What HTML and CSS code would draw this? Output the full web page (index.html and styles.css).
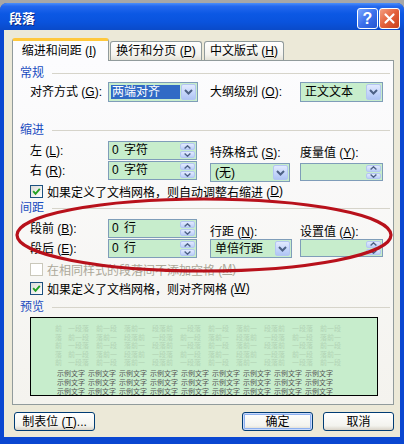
FILE: index.html
```html
<!DOCTYPE html>
<html lang="zh-CN">
<head>
<meta charset="utf-8">
<title>段落</title>
<link rel="stylesheet" href="styles.css">
</head>
<body>
<div class="window">
  <div class="titlebar">
    <span class="title">段落</span>
    <div class="tb-btns">
      <span class="tb-btn help">?</span>
      <span class="tb-btn close"><svg width="13" height="13" viewBox="0 0 13 13"><path d="M2.5 2.5 L10.5 10.5 M10.5 2.5 L2.5 10.5" stroke="#fff" stroke-width="2.2" stroke-linecap="round"/></svg></span>
    </div>
  </div>
  <div class="client">
    <div class="tabs">
      <div class="tab active">缩进和间距 (<u>I</u>)</div>
      <div class="tab t2">换行和分页 (<u>P</u>)</div>
      <div class="tab t3">中文版式 (<u>H</u>)</div>
    </div>
    <div class="panel">
      <div class="sec"><span>常规</span><i></i></div>
      <div class="grid row-general">
        <span class="lbl c1">对齐方式 (<u>G</u>):</span>
        <div class="combo w90 c2"><span class="val sel"><span class="hl">两端对齐</span></span><span class="dd"><svg width="9" height="6" viewBox="0 0 9 6"><path d="M1 1 L4.5 4.5 L8 1" fill="none" stroke="#4D6185" stroke-width="2"/></svg></span></div>
        <span class="lbl c4">大纲级别 (<u>O</u>):</span>
        <div class="combo w83 c5"><span class="val">正文文本</span><span class="dd"><svg width="9" height="6" viewBox="0 0 9 6"><path d="M1 1 L4.5 4.5 L8 1" fill="none" stroke="#4D6185" stroke-width="2"/></svg></span></div>
      </div>

      <div class="sec s-indent"><span>缩进</span><i></i></div>
      <div class="grid block">
        <span class="lbl c1 r1">左 (<u>L</u>):</span>
        <div class="spin w89 c2 r1"><span class="val">0 字符</span><span class="sbs"><span class="sb"><svg width="7" height="4" viewBox="0 0 7 4"><path d="M0.6 3.4 L3.5 0.8 L6.4 3.4" fill="none" stroke="#4D6185" stroke-width="1.4"/></svg></span><span class="sb"><svg width="7" height="4" viewBox="0 0 7 4"><path d="M0.6 0.6 L3.5 3.2 L6.4 0.6" fill="none" stroke="#4D6185" stroke-width="1.4"/></svg></span></span></div>
        <span class="lbl c1 r2">右 (<u>R</u>):</span>
        <div class="spin w89 c2 r2"><span class="val">0 字符</span><span class="sbs"><span class="sb"><svg width="7" height="4" viewBox="0 0 7 4"><path d="M0.6 3.4 L3.5 0.8 L6.4 3.4" fill="none" stroke="#4D6185" stroke-width="1.4"/></svg></span><span class="sb"><svg width="7" height="4" viewBox="0 0 7 4"><path d="M0.6 0.6 L3.5 3.2 L6.4 0.6" fill="none" stroke="#4D6185" stroke-width="1.4"/></svg></span></span></div>
        <div class="rcol c4 ind">
          <span class="rlbl">特殊格式 (<u>S</u>):</span>
          <div class="combo w80 h19"><span class="val">(无)</span><span class="dd"><svg width="9" height="6" viewBox="0 0 9 6"><path d="M1 1 L4.5 4.5 L8 1" fill="none" stroke="#4D6185" stroke-width="2"/></svg></span></div>
        </div>
        <div class="rcol c5 ind">
          <span class="rlbl">度量值 (<u>Y</u>):</span>
          <div class="spin w83"><span class="val"></span><span class="sbs"><span class="sb"><svg width="7" height="4" viewBox="0 0 7 4"><path d="M0.6 3.4 L3.5 0.8 L6.4 3.4" fill="none" stroke="#4D6185" stroke-width="1.4"/></svg></span><span class="sb"><svg width="7" height="4" viewBox="0 0 7 4"><path d="M0.6 0.6 L3.5 3.2 L6.4 0.6" fill="none" stroke="#4D6185" stroke-width="1.4"/></svg></span></span></div>
        </div>
      </div>
      <div class="cb-row cb-first"><span class="cb"><svg width="9" height="9" viewBox="0 0 9 9"><path d="M1.2 4.2 L3.5 6.8 L7.8 1.8" fill="none" stroke="#21A121" stroke-width="1.9"/></svg></span>如果定义了文档网格，则自动调整右缩进 (<u>D</u>)</div>

      <div class="sec s-space"><span>间距</span><i></i></div>
      <div class="grid block">
        <span class="lbl c1 r1">段前 (<u>B</u>):</span>
        <div class="spin w89 c2 r1"><span class="val">0 行</span><span class="sbs"><span class="sb"><svg width="7" height="4" viewBox="0 0 7 4"><path d="M0.6 3.4 L3.5 0.8 L6.4 3.4" fill="none" stroke="#4D6185" stroke-width="1.4"/></svg></span><span class="sb"><svg width="7" height="4" viewBox="0 0 7 4"><path d="M0.6 0.6 L3.5 3.2 L6.4 0.6" fill="none" stroke="#4D6185" stroke-width="1.4"/></svg></span></span></div>
        <span class="lbl c1 r2">段后 (<u>E</u>):</span>
        <div class="spin w89 c2 r2"><span class="val">0 行</span><span class="sbs"><span class="sb"><svg width="7" height="4" viewBox="0 0 7 4"><path d="M0.6 3.4 L3.5 0.8 L6.4 3.4" fill="none" stroke="#4D6185" stroke-width="1.4"/></svg></span><span class="sb"><svg width="7" height="4" viewBox="0 0 7 4"><path d="M0.6 0.6 L3.5 3.2 L6.4 0.6" fill="none" stroke="#4D6185" stroke-width="1.4"/></svg></span></span></div>
        <div class="rcol c4 spc">
          <span class="rlbl">行距 (<u>N</u>):</span>
          <div class="combo w82 h19"><span class="val">单倍行距</span><span class="dd"><svg width="9" height="6" viewBox="0 0 9 6"><path d="M1 1 L4.5 4.5 L8 1" fill="none" stroke="#4D6185" stroke-width="2"/></svg></span></div>
        </div>
        <div class="rcol c5 spc">
          <span class="rlbl">设置值 (<u>A</u>):</span>
          <div class="spin w83 h18"><span class="val"></span><span class="sbs"><span class="sb"><svg width="7" height="4" viewBox="0 0 7 4"><path d="M0.6 3.4 L3.5 0.8 L6.4 3.4" fill="none" stroke="#4D6185" stroke-width="1.4"/></svg></span><span class="sb"><svg width="7" height="4" viewBox="0 0 7 4"><path d="M0.6 0.6 L3.5 3.2 L6.4 0.6" fill="none" stroke="#4D6185" stroke-width="1.4"/></svg></span></span></div>
        </div>
      </div>
      <div class="cb-row disabled cb-dis"><span class="cb"></span>在相同样式的段落间不添加空格 (<u>M</u>)</div>
      <div class="cb-row cb-grid"><span class="cb"><svg width="9" height="9" viewBox="0 0 9 9"><path d="M1.2 4.2 L3.5 6.8 L7.8 1.8" fill="none" stroke="#21A121" stroke-width="1.9"/></svg></span>如果定义了文档网格，则对齐网格 (<u>W</u>)</div>

      <div class="sec s-prev"><span>预览</span><i></i></div>
      <div class="preview">
        <div class="pf"><span class="f1">前</span><span>一段落</span><span>前一段</span><span>落前一</span><span>段落前</span><span>一段落</span><span>前一段</span><span>落前一</span><span>段落前</span><span>一段落</span><span>前一段</span></div>
        <div class="pf"><span class="f1">落</span><span>前一段</span><span>落前一</span><span>段落前</span><span>一段落</span><span>前一段</span><span>落前一</span><span>段落前</span><span>一段落</span><span>前一段</span><span>落前一</span></div>
        <div class="pf"><span class="f1">前</span><span>一段落</span><span>前一段</span><span>落前一</span><span>段落前</span><span>一段落</span><span>前一段</span><span>落前一</span><span>段落前</span><span>一段落</span><span>前一段</span></div>
        <div class="pf"><span class="f1">落</span><span>前一段</span><span>落前一</span><span>段落前</span><span>一段落</span><span>前一段</span><span>落前一</span><span>段落前</span><span>一段落</span><span>前一段</span><span>落前一</span></div>
        <div class="pf"><span class="f1">前</span><span>一段落</span><span>前一段</span><span>落前一</span><span>段落前</span><span>一段落</span><span>前一段</span><span>落前一</span><span>段落前</span><span>一段落</span><span>前一段</span></div>
        <div class="samples">
          <div class="ps"><span>示例文字</span><span>示例文字</span><span>示例文字</span><span>示例文字</span><span>示例文字</span><span>示例文字</span><span>示例文字</span><span>示例文字</span><span>示例文字</span></div>
          <div class="ps"><span>示例文字</span><span>示例文字</span><span>示例文字</span><span>示例文字</span><span>示例文字</span><span>示例文字</span><span>示例文字</span><span>示例文字</span><span>示例文字</span></div>
          <div class="ps"><span>示例文字</span><span>示例文字</span><span>示例文字</span><span>示例文字</span><span>示例文字</span><span>示例文字</span><span>示例文字</span><span>示例文字</span><span>示例文字</span></div>
        </div>
      </div>
    </div>
    <div class="btns">
      <div class="btn b-tab">制表位 (<u>T</u>)...</div>
      <div class="btn b-ok default">确定</div>
      <div class="btn b-cancel">取消</div>
    </div>
  </div>
</div>
<svg class="annot" width="404" height="444" viewBox="0 0 404 444"><ellipse cx="204" cy="235" rx="187" ry="36" fill="none" stroke="#B8111B" stroke-width="3.2"/></svg>
</body>
</html>
```
FILE: styles.css
```css
* { box-sizing: border-box; }
html, body { margin: 0; padding: 0; }
body {
  width: 404px;
  height: 444px;
  overflow: hidden;
  background: #A7A7A7;
  padding-top: 3px;
  position: relative;
  font-family: "Liberation Sans", "Noto Sans CJK SC", sans-serif;
  font-size: 12px;
  color: #000;
}
u { text-decoration: underline; text-underline-offset: 1px; }

.window {
  width: 404px;
  height: 441px;
  background: #0A47D1;
  border-radius: 7px 7px 0 0;
  display: flex;
  flex-direction: column;
}
.titlebar {
  height: 27px;
  flex: none;
  display: flex;
  justify-content: space-between;
  align-items: flex-start;
  padding: 5px 4px 0 9px;
  border-radius: 7px 7px 0 0;
  background: linear-gradient(#4C8FFA 0%, #2468EE 12%, #0C58E4 40%, #0A53DD 70%, #0A4AC9 100%);
}
.title {
  color: #fff;
  font-weight: bold;
  font-size: 13px;
  line-height: 20px;
  text-shadow: 1px 1px 0 #0D2A85;
  font-family: "Noto Sans CJK SC", sans-serif;
}
.tb-btns { display: flex; gap: 1px; }
.tb-btn {
  width: 21px;
  height: 21px;
  border: 1px solid #fff;
  border-radius: 3px;
  display: flex;
  align-items: center;
  justify-content: center;
}
.help {
  background: linear-gradient(135deg, #7BA8FF 0%, #3C70EC 50%, #2556D0 100%);
  color: #fff;
  font: bold 16px "Liberation Sans", sans-serif;
}
.close {
  background: linear-gradient(135deg, #F4A083 0%, #E3603A 50%, #C8401C 100%);
}

.client {
  margin: 0 4px;
  height: 407px;
  flex: none;
  background: #ECE9D8;
  overflow: hidden;
}
.tabs {
  display: flex;
  align-items: flex-end;
  height: 22px;
  margin-top: 8px;
  padding-left: 8px;
  position: relative;
  z-index: 2;
}
.tab {
  height: 19px;
  border: 1px solid #919B9C;
  border-bottom: none;
  border-radius: 3px 3px 0 0;
  background: linear-gradient(#FFFFFF, #F4F3EE 70%, #E4E2D7);
  display: flex;
  align-items: center;
  justify-content: center;
  line-height: 14px;
  white-space: nowrap;
}
.tab.active {
  width: 97px;
  height: 23px;
  margin-bottom: -1px;
  border-top: 3px solid #FFC83C;
  background: #FCFCFE;
  padding-right: 3px;
}
.t2 { width: 92px; margin-left: 1px; }
.t3 { width: 80px; margin-left: 2px; }

.panel {
  margin-left: 8px;
  width: 382px;
  height: 345px;
  border: 1px solid #919B9C;
  background: linear-gradient(#FCFCFE, #F4F3EE);
  padding: 5px 3px 0 7px;
}
.sec {
  display: flex;
  align-items: center;
  height: 14px;
  line-height: 14px;
  color: #1A4CC0;
}
.sec i { flex: 1; height: 1px; background: #D6D4CA; margin-left: 8px; }
.s-indent { margin-top: 21px; }
.s-space { margin-top: 3px; }
.s-prev { margin-top: 5px; }

.grid {
  display: grid;
  grid-template-columns: 78px 90px 12px 90px 83px;
  margin-left: 10px;
}
.row-general { margin-top: 2px; height: 20px; }
.block { margin-top: 4px; grid-template-rows: 20px 20px; height: 40px; }
.c1 { grid-column: 1; }
.c2 { grid-column: 2; }
.c4 { grid-column: 4; }
.c5 { grid-column: 5; }
.r1 { grid-row: 1; }
.r2 { grid-row: 2; }
.rcol { grid-row: 1 / 3; display: flex; flex-direction: column; }
.lbl { line-height: 20px; white-space: nowrap; }
.rlbl { line-height: 14px; height: 14px; white-space: nowrap; }
.ind .rlbl { margin-top: 5px; margin-bottom: 3px; }
.spc .rlbl { margin-top: 6px; margin-bottom: 0; }

.combo, .spin {
  height: 20px;
  border: 1px solid #7F9DB9;
  background: #C7EDCC;
  display: flex;
  padding: 1px;
}
.spin { height: 19px; }
.h19 { height: 19px; }
.h18 { height: 18px; }
.w90 { width: 90px; }
.w89 { width: 89px; }
.w83 { width: 83px; }
.w82 { width: 82px; }
.w80 { width: 80px; }
.val {
  flex: 1;
  padding-left: 3px;
  line-height: 16px;
  white-space: nowrap;
  overflow: hidden;
}
.spin .val { padding-left: 2px; line-height: 15px; word-spacing: 2px; }
.val.sel { padding: 1px 1px 1px 1px; }
.hl {
  display: block;
  height: 14px;
  line-height: 14px;
  background: #316AC5;
  color: #fff;
  padding-left: 1px;
}
.dd {
  width: 15px;
  flex: none;
  border: 1px solid #B4C6F2;
  border-radius: 2px;
  background: linear-gradient(#E2EAFE, #C3D4FA 60%, #B0C5F4);
  display: flex;
  align-items: center;
  justify-content: center;
}
.sbs { width: 15px; flex: none; display: flex; flex-direction: column; gap: 1px; }
.sb {
  flex: 1;
  border: 1px solid #B4C6F2;
  border-radius: 2px;
  background: linear-gradient(#E2EAFE, #BCCFF8);
  display: flex;
  align-items: center;
  justify-content: center;
}

.cb-row {
  display: flex;
  align-items: center;
  height: 14px;
  margin-left: 10px;
  white-space: nowrap;
}
.cb-first { margin-top: 3px; }
.cb-dis { margin-top: 3px; }
.cb-grid { margin-top: 5px; }
.cb {
  width: 13px;
  height: 13px;
  flex: none;
  border: 1px solid #1C5180;
  background: linear-gradient(135deg, #DCDCD7, #FFFFFF);
  display: flex;
  align-items: center;
  justify-content: center;
  margin-right: 4px;
}
.disabled { color: #ACA899; }
.disabled .cb { border-color: #CAC8BB; background: #FFFFFF; }

.preview {
  margin-top: 3px;
  margin-left: 10px;
  width: 348px;
  height: 79px;
  border: 1px solid #000;
  background: #C7EDCC;
  overflow: hidden;
  padding-top: 6px;
  font-family: "Noto Sans CJK SC", sans-serif;
  font-size: 7px;
}
.pf {
  display: flex;
  height: 8.5px;
  line-height: 8.5px;
  padding-left: 24px;
  color: #B2D3B5;
  white-space: nowrap;
}
.pf span { margin-right: 7px; }
.pf .f1 { margin-right: 6px; }
.samples { margin-top: 2px; }
.ps {
  display: flex;
  height: 9px;
  line-height: 9px;
  padding-left: 26px;
  color: #555;
  white-space: nowrap;
}
.ps span { margin-right: 3px; }

.btns {
  display: flex;
  margin-top: 7px;
  padding: 0 6px 0 10px;
}
.btn {
  height: 19px;
  border: 1px solid #003C74;
  border-radius: 3px;
  background: linear-gradient(#FFFFFF, #F3F3EE 75%, #D9D3C8);
  display: flex;
  align-items: center;
  justify-content: center;
  line-height: 14px;
  white-space: nowrap;
}
.b-tab { width: 81px; }
.b-ok { width: 71px; margin-left: auto; }
.b-cancel { width: 71px; margin-left: 10px; }
.default { box-shadow: inset 0 0 0 1px #C9DAFC, inset 0 0 0 2px #8DB0EF; }

.annot {
  position: absolute;
  left: 0;
  top: 0;
  pointer-events: none;
}
```
